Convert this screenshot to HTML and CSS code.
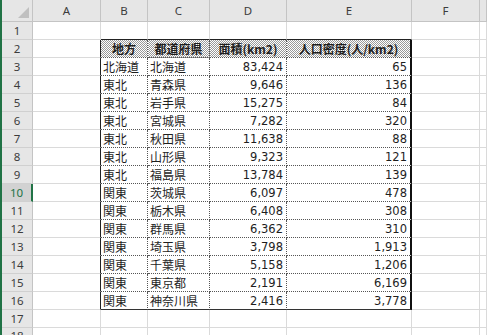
FILE: index.html
```html
<!DOCTYPE html>
<html lang="ja">
<head>
<meta charset="utf-8">
<link rel="stylesheet" href="styles.css">
</head>
<body>
<div class="sheet">
  <div class="corner"><span class="tri"></span></div>
  <div class="ch">A</div><div class="ch">B</div><div class="ch">C</div><div class="ch">D</div><div class="ch">E</div><div class="ch">F</div><div class="ch"></div>

  <div class="rh">1</div><div class="c"></div><div class="c top"></div><div class="c top"></div><div class="c top"></div><div class="c top"></div><div class="c"></div><div class="c"></div>

  <div class="rh">2</div><div class="c left"></div><div class="t th">地方</div><div class="t th">都道府県</div><div class="t th">面積(km2)</div><div class="t th last">人口密度(人/km2)</div><div class="c"></div><div class="c"></div>

  <div class="rh">3</div><div class="c left"></div><div class="t">北海道</div><div class="t">北海道</div><div class="t num">83,424</div><div class="t num last">65</div><div class="c"></div><div class="c"></div>
  <div class="rh">4</div><div class="c left"></div><div class="t">東北</div><div class="t">青森県</div><div class="t num">9,646</div><div class="t num last">136</div><div class="c"></div><div class="c"></div>
  <div class="rh">5</div><div class="c left"></div><div class="t">東北</div><div class="t">岩手県</div><div class="t num">15,275</div><div class="t num last">84</div><div class="c"></div><div class="c"></div>
  <div class="rh">6</div><div class="c left"></div><div class="t">東北</div><div class="t">宮城県</div><div class="t num">7,282</div><div class="t num last">320</div><div class="c"></div><div class="c"></div>
  <div class="rh">7</div><div class="c left"></div><div class="t">東北</div><div class="t">秋田県</div><div class="t num">11,638</div><div class="t num last">88</div><div class="c"></div><div class="c"></div>
  <div class="rh">8</div><div class="c left"></div><div class="t">東北</div><div class="t">山形県</div><div class="t num">9,323</div><div class="t num last">121</div><div class="c"></div><div class="c"></div>
  <div class="rh">9</div><div class="c left"></div><div class="t">東北</div><div class="t">福島県</div><div class="t num">13,784</div><div class="t num last">139</div><div class="c"></div><div class="c"></div>
  <div class="rh sel">10</div><div class="c left"></div><div class="t">関東</div><div class="t">茨城県</div><div class="t num">6,097</div><div class="t num last">478</div><div class="c"></div><div class="c"></div>
  <div class="rh">11</div><div class="c left"></div><div class="t">関東</div><div class="t">栃木県</div><div class="t num">6,408</div><div class="t num last">308</div><div class="c"></div><div class="c"></div>
  <div class="rh">12</div><div class="c left"></div><div class="t">関東</div><div class="t">群馬県</div><div class="t num">6,362</div><div class="t num last">310</div><div class="c"></div><div class="c"></div>
  <div class="rh">13</div><div class="c left"></div><div class="t">関東</div><div class="t">埼玉県</div><div class="t num">3,798</div><div class="t num last">1,913</div><div class="c"></div><div class="c"></div>
  <div class="rh">14</div><div class="c left"></div><div class="t">関東</div><div class="t">千葉県</div><div class="t num">5,158</div><div class="t num last">1,206</div><div class="c"></div><div class="c"></div>
  <div class="rh">15</div><div class="c left"></div><div class="t">関東</div><div class="t">東京都</div><div class="t num">2,191</div><div class="t num last">6,169</div><div class="c"></div><div class="c"></div>
  <div class="rh">16</div><div class="c left"></div><div class="t bot">関東</div><div class="t bot">神奈川県</div><div class="t num bot">2,416</div><div class="t num last bot">3,778</div><div class="c"></div><div class="c"></div>

  <div class="rh">17</div><div class="c"></div><div class="c"></div><div class="c"></div><div class="c"></div><div class="c"></div><div class="c"></div><div class="c"></div>
  <div class="rh">18</div><div class="c"></div><div class="c"></div><div class="c"></div><div class="c"></div><div class="c"></div><div class="c"></div><div class="c"></div>
</div>
</body>
</html>
```

FILE: styles.css
```css
html, body {
  margin: 0;
  padding: 0;
  background: #ffffff;
  overflow: hidden;
}
body {
  width: 487px;
  height: 335px;
  border-left: 2px solid #217346;
  box-sizing: border-box;
}
.sheet {
  display: grid;
  grid-template-columns: 31px 68px 47px 62px 77px 125px 68px 7px;
  grid-template-rows: 22px repeat(17, 18px);
  font-family: "Noto Sans CJK JP", "Noto Sans", sans-serif;
  font-size: 12px;
  color: #1e1e1e;
}
.sheet > div {
  box-sizing: border-box;
  border-right: 1px solid #dadada;
  border-bottom: 1px solid #dadada;
  display: flex;
  align-items: flex-end;
  overflow: hidden;
  white-space: nowrap;
  line-height: 16px;
}
.sheet > .corner {
  background: #e6e6e6;
  border-right: 1px solid #c4c4c4;
  border-bottom: 1px solid #c4c4c4;
  position: relative;
}
.tri {
  position: absolute;
  right: 3px;
  bottom: 3px;
  width: 0;
  height: 0;
  border-left: 11px solid transparent;
  border-bottom: 11px solid #c0c0c0;
}
.sheet > .ch {
  background: #e6e6e6;
  border-right: 1px solid #c4c4c4;
  border-bottom: 1px solid #c4c4c4;
  justify-content: center;
  align-items: center;
  font-family: "Noto Sans", "DejaVu Sans", sans-serif;
  font-size: 11.5px;
  color: #3c3c3c;
}
.sheet > .rh {
  background: #e6e6e6;
  border-right: 1px solid #c4c4c4;
  border-bottom: 1px solid #d0d0d0;
  justify-content: center;
  align-items: center;
  font-family: "Noto Sans", "DejaVu Sans", sans-serif;
  font-size: 11.5px;
  color: #3c3c3c;
}
.sheet > .rh.sel {
  background: #d2d2d2;
  color: #217346;
  border-right: 2px solid #217346;
}
.sheet > .top {
  border-bottom: 1px solid #222222;
}
.sheet > .left {
  border-right: 1px solid #222222;
}
.sheet > .t {
  border-right: 1px dotted #555555;
  border-bottom: 1px dotted #555555;
  padding: 0 2px 0 2px;
}
.sheet > .th {
  justify-content: center;
  font-weight: bold;
  background-color: #ffffff;
  background-image: repeating-conic-gradient(#9a9a9a 0 25%, #ffffff 0 50%);
  background-size: 2px 2px;
}
.sheet > .num {
  justify-content: flex-end;
  font-family: "DejaVu Sans", sans-serif;
  font-size: 11.5px;
  padding-right: 3px;
}
.sheet > .last {
  border-right: 2px solid #111111;
}
.sheet > .bot {
  border-bottom: 1px solid #333333;
}
```
